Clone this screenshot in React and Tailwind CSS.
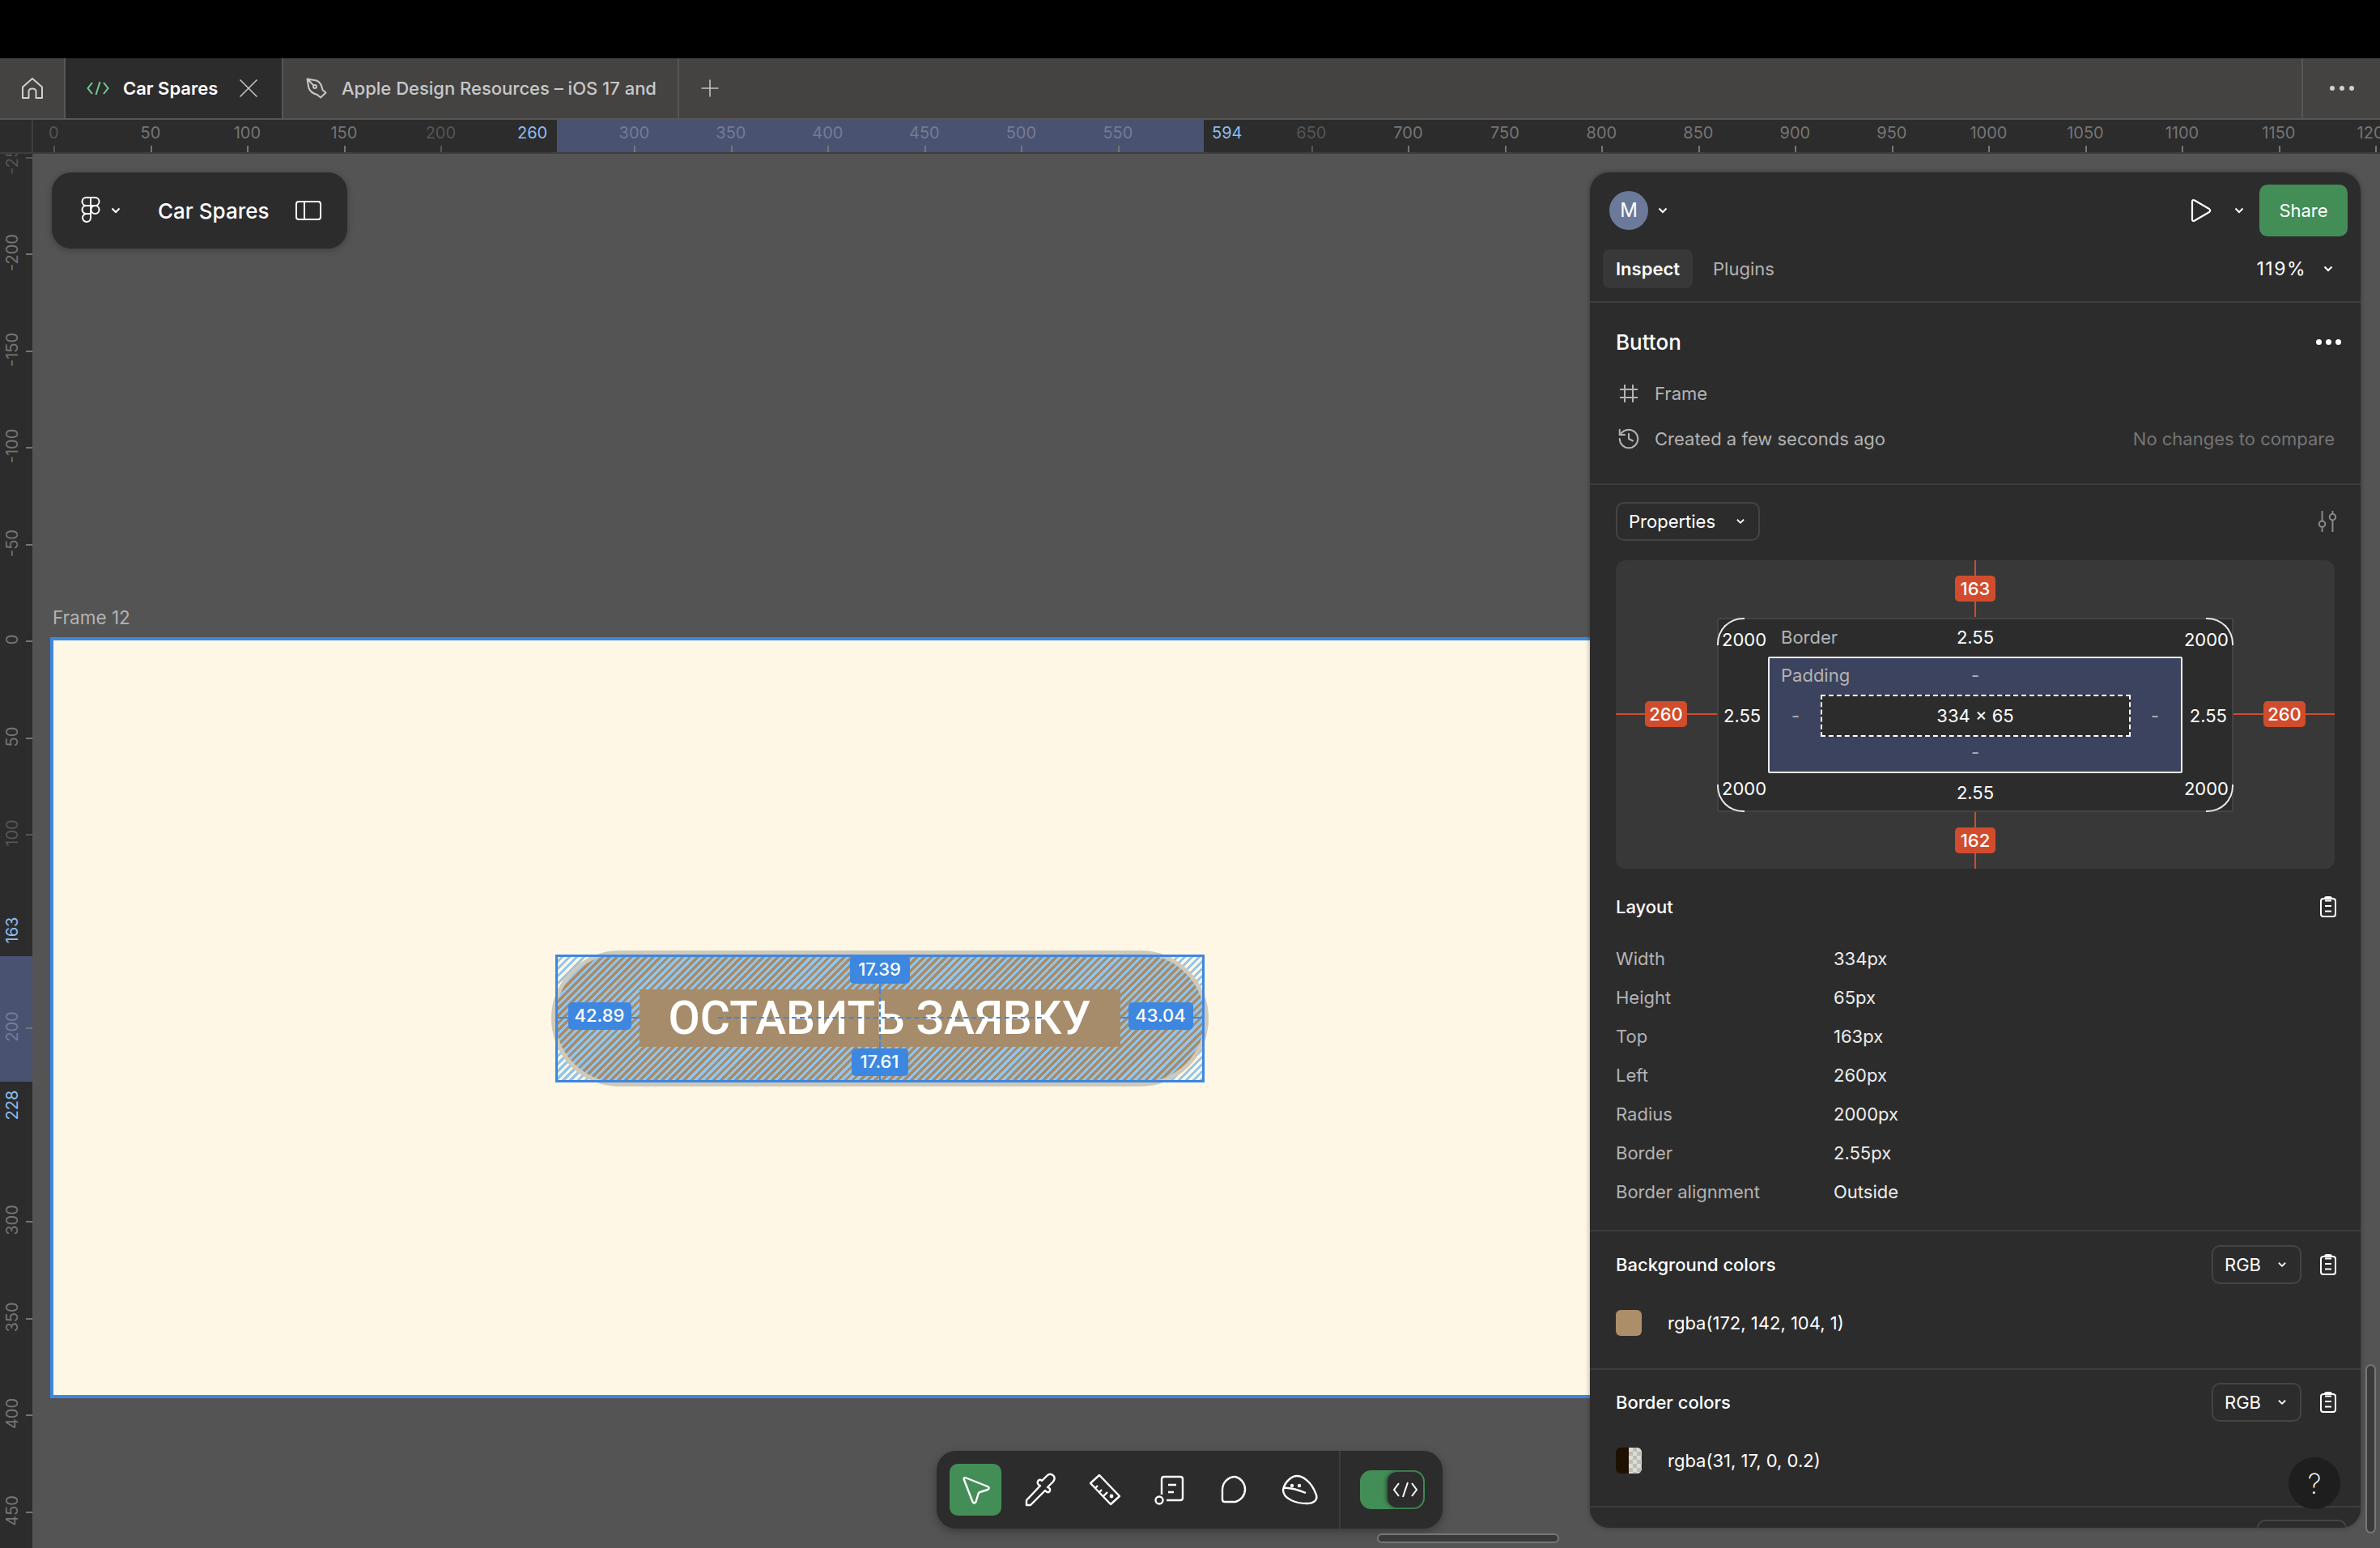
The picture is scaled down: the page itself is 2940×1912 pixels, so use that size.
import { History, Plus, X } from "lucide-react";

const hLabels = [
  [0, "dim"], [50], [100], [150], [200, "dim"], [300, "sel"], [350, "sel"], [400, "sel"], [450, "sel"], [500, "sel"], [550, "sel"],
  [650, "dim"], [700], [750], [800], [850], [900], [950], [1000], [1050], [1100], [1150], [1200],
];
const vLabels = [
  [-250, "dim"], [-200], [-150], [-100], [-50], [0], [50], [100, "dim"], [200, "sel"], [300], [350], [400], [450],
];
const layoutRows = [
  ["Width", "334px"], ["Height", "65px"], ["Top", "163px"], ["Left", "260px"], ["Radius", "2000px"], ["Border", "2.55px"], ["Border alignment", "Outside"],
];

const rulerX = (v) => 25.4 + v * 2.39;
const rulerY = (v) => 600 + v * 2.39;

const labelColor = (kind) => {
  if (kind === "dim") return "text-[#555555]";
  if (kind === "sel") return "text-[#757b95]";
  return "text-[#757575]";
};

const Chevron = ({ className = "" }) => (
  <svg width="12" height="8" viewBox="0 0 12 8" fill="none" stroke="currentColor" strokeWidth="2" className={className}>
    <path d="M1.5 1.5 6 6l4.5-4.5" />
  </svg>
);

const Clipboard = () => (
  <svg width="20" height="26" viewBox="0 0 20 26" fill="none" stroke="white" strokeWidth="2">
    <rect x="1" y="3" width="18" height="22" rx="3" />
    <path d="M6 3V2.500Q6 1 8 1h4q2 0 2 1.500V3M6 5.500h8M6 12h8M6 18.500h8" />
  </svg>
);

const Dropdown = ({ label, className = "" }) => (
  <div className={`flex h-[48px] items-center justify-between rounded-[10px] border-2 border-[#444444] pl-[14px] pr-[16px] text-[22px] text-white ${className}`}>
    {label}
    <Chevron className="scale-90 text-white" />
  </div>
);

function HorizontalRuler() {
  return (
    <div className="flex h-[42px] border-b-2 border-[#3d3d3d] bg-[#2c2c2c]">
      <div className="w-[41px] border-r-2 border-[#3d3d3d]" />
      <div className="relative flex-1 overflow-hidden">
        <div className="absolute inset-y-0 left-[647px] w-[799px] bg-[#4a5272]" />
        {hLabels.map(([v, kind]) => (
          <div key={v}>
            <span style={{ left: rulerX(v) }} className={`absolute top-[1px] -translate-x-1/2 text-[20px] leading-[30px] ${labelColor(kind)}`}>{v}</span>
            <span style={{ left: rulerX(v) }} className={`absolute bottom-0 h-[8px] w-[2px] ${kind === "dim" ? "bg-[#555555]" : "bg-[#757575]"}`} />
          </div>
        ))}
        <span className="absolute left-[598px] top-[1px] text-[20px] leading-[30px] text-[#8dbdf0]">260</span>
        <span className="absolute left-[1456px] top-[1px] text-[20px] leading-[30px] text-[#8dbdf0]">594</span>
      </div>
    </div>
  );
}

function VerticalRuler() {
  return (
    <div className="relative h-full w-[40px] shrink-0 overflow-hidden bg-[#2c2c2c]">
      <div className="absolute inset-x-0 top-[991px] h-[155px] bg-[#4a5272]" />
      {vLabels.map(([v, kind]) => (
        <div key={v}>
          <span style={{ top: rulerY(v) }} className={`absolute left-[3px] -translate-y-1/2 rotate-180 text-[20px] leading-[24px] [writing-mode:vertical-rl] ${labelColor(kind)}`}>{v}</span>
          <span style={{ top: rulerY(v) + 1 }} className={`absolute right-0 h-[2px] w-[8px] ${kind === "dim" ? "bg-[#555555]" : "bg-[#757575]"}`} />
        </div>
      ))}
      <span className="absolute left-[3px] top-[959px] -translate-y-1/2 rotate-180 text-[20px] leading-[24px] text-[#8dbdf0] [writing-mode:vertical-rl]">163</span>
      <span className="absolute left-[3px] top-[1175px] -translate-y-1/2 rotate-180 text-[20px] leading-[24px] text-[#8dbdf0] [writing-mode:vertical-rl]">228</span>
    </div>
  );
}

function Tabs() {
  return (
    <div className="flex h-[76px] border-b-2 border-[#575654] bg-[#444341] text-[22px]">
      <div className="flex w-[79px] items-center justify-center">
        <svg width="28" height="28" viewBox="0 0 28 28" fill="none" stroke="#cfcfcf" strokeWidth="2" strokeLinejoin="round">
          <path d="M2 12.500 14 2l12 10.500V26h-7.500v-8q0-3.500-4.500-3.500T9.500 18v8H2z" />
        </svg>
      </div>
      <div className="flex w-[271px] items-center border-x-2 border-[#575654] bg-[#2c2c2c] pl-[26px]">
        <svg width="28" height="20" viewBox="0 0 28 20" fill="none" stroke="#6fcf97" strokeWidth="2">
          <path d="M7 3 1.500 10 7 17M21 3l5.500 7L21 17M16.500 2l-5 16" />
        </svg>
        <span className="ml-[17px] font-semibold text-white">Car Spares</span>
        <X size={40} strokeWidth={1} className="ml-[18px] text-[#c4c4c4]" />
      </div>
      <div className="flex w-[489px] items-center border-r-2 border-[#575654] pl-[28px]">
        <svg width="26" height="26" viewBox="0 0 26 26" fill="none" stroke="#c8c8c8" strokeWidth="2" strokeLinejoin="round" className="shrink-0">
          <path d="M1.500 1.500 13 3.500Q19 6 20.500 15l4 3.500-6.500 6-4-3.500Q6 19 3.500 13zM1.500 1.500 9.500 9.500" />
          <circle cx="11" cy="11" r="2" />
        </svg>
        <span className="ml-[18px] w-[396px] overflow-hidden whitespace-nowrap font-medium text-[#c8c8c8]">Apple Design Resources – iOS 17 and iPadOS 17</span>
      </div>
      <div className="flex w-[76px] items-center justify-center">
        <Plus size={34} strokeWidth={1.1} className="text-[#c4c4c4]" />
      </div>
      <div className="flex-1" />
      <div className="flex w-[97px] items-center justify-center gap-[6px] border-l-2 border-[#575654]">
        <span className="size-[6px] rounded-full bg-[#d0d0d0]" />
        <span className="size-[6px] rounded-full bg-[#d0d0d0]" />
        <span className="size-[6px] rounded-full bg-[#d0d0d0]" />
      </div>
    </div>
  );
}

function DesignFrame() {
  return (
    <div className="absolute left-[22px] top-[597px] flex h-[940px] w-[2049px] items-center justify-center border-4 border-[#3d87e0] bg-[#fff7e6]">
      <div className="relative mt-[1px] h-[158px] w-[802px]">
        <div className="absolute -inset-[2px] rounded-full bg-[#a68c6a]" />
        <div className="absolute inset-0 bg-[repeating-linear-gradient(135deg,#93c5ec_0,#93c5ec_3px,transparent_3px,transparent_6.4px)]" />
        <div className="absolute -inset-[5px] rounded-full border-[5px] border-[#d0c9b9]" />
        <div className="absolute inset-0 border-[3px] border-[#3d87e0]" />
        <div className="absolute inset-0 flex items-center justify-center">
          <div className="flex h-[71px] w-[594px] items-center justify-center bg-[#a68c6a] font-['Roboto',sans-serif] text-[57px] font-medium leading-none text-white">ОСТАВИТЬ ЗАЯВКУ</div>
        </div>
        {/* размеры поверх кнопки */}
        <div className="absolute left-[400px] top-0 h-[43px] w-[2px] bg-[#3d87e0]" />
        <div className="absolute left-[400px] top-[43px] h-[71px] border-l-2 border-dashed border-[#3d87e0]" />
        <div className="absolute bottom-0 left-[400px] h-[44px] w-[2px] bg-[#3d87e0]" />
        <div className="absolute left-0 top-[77px] h-[2px] w-[104px] bg-[#3d87e0]" />
        <div className="absolute right-0 top-[77px] h-[2px] w-[104px] bg-[#3d87e0]" />
        <div className="absolute left-[201px] top-[77px] w-[400px] border-t-2 border-dashed border-[#3d87e0]" />
        <div className="absolute left-[16px] top-[59px] flex h-[34px] w-[78px] items-center justify-center rounded-[5px] bg-[#3d87e0] text-[22px] font-medium text-white">42.89</div>
        <div className="absolute left-[708px] top-[59px] flex h-[34px] w-[80px] items-center justify-center rounded-[5px] bg-[#3d87e0] text-[22px] font-medium text-white">43.04</div>
        <div className="absolute left-[364px] top-[2px] flex h-[34px] w-[74px] items-center justify-center rounded-[5px] bg-[#3d87e0] text-[22px] font-medium text-white">17.39</div>
        <div className="absolute left-[366px] top-[116px] flex h-[34px] w-[70px] items-center justify-center rounded-[5px] bg-[#3d87e0] text-[22px] font-medium text-white">17.61</div>
      </div>
    </div>
  );
}

function BoxModel() {
  return (
    <div className="relative mx-[32px] mt-[24px] flex h-[381px] items-center justify-center rounded-[12px] bg-[#383838] text-[22px] text-white">
      <div className="absolute left-[443px] top-0 h-[70px] w-[2px] bg-[#d04c2d]" />
      <div className="absolute bottom-0 left-[443px] h-[70px] w-[2px] bg-[#d04c2d]" />
      <div className="absolute left-0 top-[189px] h-[2px] w-[125px] bg-[#d04c2d]" />
      <div className="absolute right-0 top-[189px] h-[2px] w-[125px] bg-[#d04c2d]" />
      <div className="absolute left-[419px] top-[19px] flex h-[32px] w-[50px] items-center justify-center rounded-[5px] bg-[#d04c2d] font-medium">163</div>
      <div className="absolute bottom-[19px] left-[419px] flex h-[32px] w-[50px] items-center justify-center rounded-[5px] bg-[#d04c2d] font-medium">162</div>
      <div className="absolute left-[36px] top-[174px] flex h-[32px] w-[52px] items-center justify-center rounded-[5px] bg-[#d04c2d] font-medium">260</div>
      <div className="absolute right-[36px] top-[174px] flex h-[32px] w-[52px] items-center justify-center rounded-[5px] bg-[#d04c2d] font-medium">260</div>

      <div className="relative flex h-[240px] w-[638px] items-center justify-center rounded-[2px] border-2 border-[#444444] bg-[#2c2c2c]">
        <div className="absolute -left-[2px] -top-[2px] size-[34px] rounded-tl-[32px] border-l-2 border-t-2 border-[#e8e8e8]" />
        <div className="absolute -right-[2px] -top-[2px] size-[34px] rounded-tr-[32px] border-r-2 border-t-2 border-[#e8e8e8]" />
        <div className="absolute -bottom-[2px] -left-[2px] size-[34px] rounded-bl-[32px] border-b-2 border-l-2 border-[#e8e8e8]" />
        <div className="absolute -bottom-[2px] -right-[2px] size-[34px] rounded-br-[32px] border-b-2 border-r-2 border-[#e8e8e8]" />

        <span className="absolute left-[4px] top-[9px]">2000</span>
        <span className="absolute right-[4px] top-[9px]">2000</span>
        <span className="absolute bottom-[10px] left-[4px]">2000</span>
        <span className="absolute bottom-[10px] right-[4px]">2000</span>
        <span className="absolute left-[77px] top-[6px] text-[#b3b3b3]">Border</span>
        <span className="absolute left-1/2 top-[6px] -translate-x-1/2">2.55</span>
        <span className="absolute bottom-[5px] left-1/2 -translate-x-1/2">2.55</span>
        <span className="absolute left-[6px] top-[103px]">2.55</span>
        <span className="absolute right-[6px] top-[103px]">2.55</span>

        <div className="relative flex h-[144px] w-[512px] items-center justify-center rounded-[2px] border-2 border-[#ececec] bg-[#3c435f]">
          <span className="absolute left-[14px] top-[5px] text-[#b3b3b3]">Padding</span>
          <span className="absolute left-1/2 top-[5px] -translate-x-1/2 text-[#b3b3b3]">-</span>
          <span className="absolute bottom-[7px] left-1/2 -translate-x-1/2 text-[#b3b3b3]">-</span>
          <span className="absolute left-[27px] top-[55px] text-[#b3b3b3]">-</span>
          <span className="absolute right-[27px] top-[55px] text-[#b3b3b3]">-</span>
          <div className="mt-[3px] flex h-[52px] w-[383px] items-center justify-center border-2 border-dashed border-white bg-[#2c2c2c]">334 × 65</div>
        </div>
      </div>
    </div>
  );
}

function InspectPanel() {
  return (
    <div className="absolute left-[1924px] top-[23px] flex h-[1674px] w-[952px] flex-col overflow-hidden rounded-[24px] bg-[#2c2c2c] text-[22px] shadow-[0_0_6px_rgba(0,0,0,0.35)]">
      <div className="h-[161px] shrink-0 border-b-2 border-[#3d3d3d]">
        <div className="flex h-[64px] mt-[15px] items-center pl-[24px] pr-[16px]">
          <div className="flex size-[48px] items-center justify-center rounded-full bg-[#6b7a9a] text-[24px] text-white">M</div>
          <Chevron className="ml-[12px] text-white" />
          <div className="flex-1" />
          <svg width="26" height="30" viewBox="0 0 26 30" fill="none" stroke="white" strokeWidth="2.200" strokeLinejoin="round">
            <path d="M2 4q0-3 3-1.500L23 13q2.500 2 0 4L5 27.500Q2 29 2 26z" />
          </svg>
          <Chevron className="ml-[28px] text-white" />
          <div className="ml-[19px] flex h-[64px] w-[109px] items-center justify-center rounded-[10px] bg-[#438e57] text-white">Share</div>
        </div>
        <div className="mt-[16px] flex h-[48px] items-center pl-[16px] pr-[34px]">
          <div className="flex h-[48px] w-[111px] items-center justify-center rounded-[8px] bg-[#383838] font-semibold text-white">Inspect</div>
          <span className="ml-[25px] text-[#b3b3b3]">Plugins</span>
          <div className="flex-1" />
          <span className="text-[23px] tracking-[1.5px] text-white">119%</span>
          <Chevron className="ml-[21px] text-white" />
        </div>
      </div>

      <div className="h-[225px] shrink-0 border-b-2 border-[#3d3d3d] pl-[32px] pr-[32px] pt-[28px]">
        <div className="flex h-[40px] items-center justify-between">
          <span className="text-[26px] font-medium text-white">Button</span>
          <div className="-mr-[8px] flex gap-[5px]">
            <span className="size-[7px] rounded-full bg-white" />
            <span className="size-[7px] rounded-full bg-white" />
            <span className="size-[7px] rounded-full bg-white" />
          </div>
        </div>
        <div className="mt-[24px] flex h-[40px] items-center text-[#b3b3b3]">
          <svg width="24" height="24" viewBox="0 0 24 24" fill="none" stroke="#b3b3b3" strokeWidth="2" className="ml-[4px]">
            <path d="M7 1v22M17 1v22M1 7h22M1 17h22" />
          </svg>
          <span className="ml-[20px]">Frame</span>
        </div>
        <div className="mt-[16px] flex h-[40px] items-center text-[#b3b3b3]">
          <History size={30} strokeWidth={1.6} className="ml-[1px]" />
          <span className="ml-[17px]">Created a few seconds ago</span>
          <span className="ml-auto text-[#757575]">No changes to compare</span>
        </div>
      </div>

      <div className="h-[922px] shrink-0 border-b-2 border-[#3d3d3d]">
        <div className="mt-[21px] flex items-center pl-[32px] pr-[28px]">
          <Dropdown label="Properties" className="h-[46px] w-[178px]" />
          <svg width="26" height="28" viewBox="0 0 24 26" fill="none" stroke="#8c8c8c" strokeWidth="1.800" className="ml-auto">
            <path d="M6 1v11M6 20v5M18 1v3M18 12v13" />
            <circle cx="6" cy="16" r="3.500" />
            <circle cx="18" cy="8" r="3.500" />
          </svg>
        </div>
        <BoxModel />
        <div className="mt-[27px] flex h-[40px] items-center justify-between pl-[32px] pr-[30px]">
          <span className="font-medium text-white">Layout</span>
          <Clipboard />
        </div>
        <div className="mt-[20px] pl-[32px]">
          {layoutRows.map(([name, value]) => (
            <div key={name} className="flex h-[48px] items-center">
              <span className="w-[269px] text-[#b3b3b3]">{name}</span>
              <span className="text-[#eeeeee]">{value}</span>
            </div>
          ))}
        </div>
      </div>

      <div className="h-[171px] shrink-0 border-b-2 border-[#3d3d3d] pl-[32px] pr-[30px] pt-[17px]">
        <div className="flex items-center">
          <span className="font-medium text-white">Background colors</span>
          <Dropdown label="RGB" className="ml-auto w-[111px]" />
          <div className="ml-[23px]"><Clipboard /></div>
        </div>
        <div className="mt-[32px] flex h-[32px] items-center">
          <span className="size-[32px] rounded-[6px] bg-[#ac8e68]" />
          <span className="ml-[32px] text-white">rgba(172, 142, 104, 1)</span>
        </div>
      </div>

      <div className="h-[170px] shrink-0 border-b-2 border-[#3d3d3d] pl-[32px] pr-[30px] pt-[16px]">
        <div className="flex items-center">
          <span className="font-medium text-white">Border colors</span>
          <Dropdown label="RGB" className="ml-auto w-[111px]" />
          <div className="ml-[23px]"><Clipboard /></div>
        </div>
        <div className="mt-[32px] flex h-[32px] items-center">
          <span className="flex size-[32px] overflow-hidden rounded-[6px]">
            <span className="w-1/2 bg-[#1f1100]" />
            <span className="w-1/2 bg-[#cfcfc9] bg-[conic-gradient(#bdbdb7_25%,#dcdcd6_0_50%,#bdbdb7_0_75%,#dcdcd6_0)] bg-[length:10px_10px]" />
          </span>
          <span className="ml-[32px] text-white">rgba(31, 17, 0, 0.2)</span>
        </div>
      </div>

      <div className="flex justify-end pr-[17px] pt-[15px]">
        <Dropdown label="" className="w-[111px] shrink-0" />
      </div>

      <div className="absolute left-[863px] top-[1587px] flex size-[64px] items-center justify-center rounded-full bg-[#1e1e1e] text-[34px] font-extralight text-white">?</div>
    </div>
  );
}

function Toolbar() {
  return (
    <div className="absolute left-[1117px] top-[1602px] flex h-[96px] w-[625px] items-center rounded-[24px] bg-[#2c2c2c] pl-[16px] text-white shadow-[0_4px_12px_rgba(0,0,0,0.3)]">
      <div className="flex size-[64px] items-center justify-center rounded-[10px] bg-[#438e57]">
        <svg width="48" height="48" viewBox="0 0 48 48" fill="none" stroke="white" strokeWidth="2.400" strokeLinejoin="round">
          <path d="M10 12q-1.500-4 2.500-2.500L39 20q3.500 2 0 4l-9.500 3q-1.500.5-2 2l-3 10q-2 3-4 0z" />
        </svg>
      </div>
      <div className="ml-[24px] flex size-[48px] items-center justify-center">
        <svg width="48" height="48" viewBox="0 0 48 48" fill="none" stroke="white" strokeWidth="2.400" strokeLinejoin="round">
          <path d="M7 43h5l18-18 2.500 2q2.500 1 3.500-2 .5-2-1-3l-2-1 7-7q3.500-5-.5-8t-7.500 1l-6 6-1-1q-3-1-4 2-1 2 1 4l2 1L7 37z" />
        </svg>
      </div>
      <div className="ml-[32px] flex size-[48px] items-center justify-center">
        <svg width="48" height="48" viewBox="0 0 48 48" fill="none" stroke="white" strokeWidth="2.400" strokeLinejoin="round">
          <path d="M17 6l25 26-11 10L6 16zM12 22l3-3M17 27l3-3M22 32l5-5" />
          <circle cx="32" cy="32" r="1.200" fill="white" />
        </svg>
      </div>
      <div className="ml-[31px] flex size-[48px] items-center justify-center">
        <svg width="48" height="48" viewBox="0 0 48 48" fill="none" stroke="white" strokeWidth="2.400">
          <path d="M15 30V11q0-3 3-3h20q3 0 3 3v23q0 3-3 3H21M23 18h10M23 27h7" />
          <circle cx="12" cy="37" r="4.500" />
        </svg>
      </div>
      <div className="ml-[34px] flex size-[48px] items-center justify-center">
        <svg width="48" height="48" viewBox="0 0 48 48" fill="none" stroke="white" strokeWidth="2.400">
          <path d="M24 8a16 16 0 0 1 0 31H11q-3 0-3-3V24A16 16 0 0 1 24 8z" />
        </svg>
      </div>
      <div className="ml-[32px] flex size-[48px] items-center justify-center">
        <svg width="48" height="48" viewBox="0 0 48 48" fill="none" stroke="white" strokeWidth="2.400">
          <path d="M3 24C5 14 14 7 20 7c8 0 18 8 23 21 4 8-1 13-11 13C20 41 3 36 3 24zM3 22c8-1 18 2 28 6" />
          <circle cx="14" cy="19" r="1" fill="white" />
          <circle cx="23" cy="19" r="1" fill="white" />
        </svg>
      </div>
      <div className="ml-[24px] h-full w-[2px] bg-[#3d3d3d]" />
      <div className="ml-[24px] flex h-[48px] w-[80px] items-center justify-end rounded-[14px] bg-[#438e57] pr-[2px]">
        <div className="flex h-[44px] w-[44px] items-center justify-center rounded-[12px] bg-[#2c2c2c] shadow-[-2px_0_4px_rgba(0,0,0,0.4)]">
          <svg width="32" height="22" viewBox="0 0 32 22" fill="none" stroke="white" strokeWidth="2">
            <path d="M8 3 2 11l6 8M24 3l6 8-6 8M19 2l-6 18" />
          </svg>
        </div>
      </div>
    </div>
  );
}

export default function App() {
  return (
    <div className="flex h-[1912px] w-[2940px] flex-col overflow-hidden bg-[#545454] font-['Inter',sans-serif]">
      <div className="h-[72px] shrink-0 bg-black" />
      <Tabs />
      <HorizontalRuler />
      <div className="flex min-h-0 flex-1">
        <VerticalRuler />
        <div className="relative flex-1">
          <span className="absolute left-[25px] top-[560px] text-[22.5px] leading-[26px] text-[#b3b3b3]">Frame 12</span>
          <DesignFrame />

          {/* карточка файла */}
          <div className="absolute left-[24px] top-[23px] flex h-[94px] w-[365px] items-center rounded-[24px] bg-[#2c2c2c] pl-[36px] text-white shadow-[0_2px_8px_rgba(0,0,0,0.25)]">
            <svg width="24" height="34" viewBox="0 0 24 34" fill="none" stroke="white" strokeWidth="2">
              <path d="M12 1H6.500a5 5 0 0 0 0 10H12zM12 1h5.500a5 5 0 0 1 0 10H12zM12 11H6.500a5 5 0 0 0 0 10H12zM6.500 21H12v5.500a5 5 0 1 1-5.500-5.500z" />
              <circle cx="17.500" cy="16" r="5" />
            </svg>
            <Chevron className="ml-[13px]" />
            <span className="ml-[46px] text-[26px] font-medium">Car Spares</span>
            <svg width="32" height="24" viewBox="0 0 32 24" fill="none" stroke="white" strokeWidth="2" className="ml-[32px]">
              <rect x="1" y="1" width="30" height="22" rx="3" />
              <path d="M11 1v22" />
            </svg>
          </div>

          <InspectPanel />
          <Toolbar />
          <div className="absolute left-[1661px] top-[1704px] h-[12px] w-[225px] rounded-full border-2 border-[#777777] bg-[#3a3a3a]" />
          <div className="absolute left-[2882px] top-[1495px] h-[209px] w-[13px] rounded-full border-2 border-[#777777] bg-[#3a3a3a]" />
        </div>
      </div>
    </div>
  );
}
